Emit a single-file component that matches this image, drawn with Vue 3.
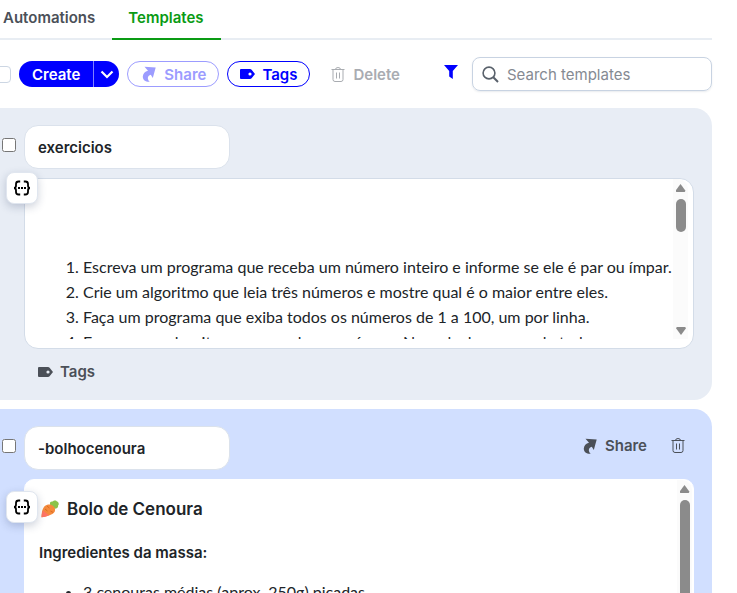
<template>
    <div class="page">
        <nav class="tabs">
            <a href="#automations" class="tab">Automations</a>
            <a href="#templates" class="tab active">Templates</a>
        </nav>

        <div class="toolbar">
            <input type="checkbox" class="select-all" aria-label="Select all" />
            <div class="create-group">
                <button type="button" class="create">Create</button>
                <button type="button" class="create-more" aria-label="More create options">
                    <svg width="14" height="9" viewBox="0 0 14 9"><path d="M1.5 1.5 L7 7 L12.5 1.5" fill="none" stroke="currentColor" stroke-width="2.2" /></svg>
                </button>
            </div>
            <button type="button" class="pill share" disabled>
                <svg class="share-icon" viewBox="0 0 14 16"><path :d="icons.share" fill="currentColor" /></svg>
                Share
            </button>
            <button type="button" class="pill tags">
                <svg class="tag-icon" viewBox="0 0 15 10"><path :d="icons.tag" fill="currentColor" fill-rule="evenodd" /></svg>
                Tags
            </button>
            <button type="button" class="plain delete" disabled>
                <svg class="trash-icon" viewBox="0 0 14 15"><path :d="icons.trash" fill="none" stroke="currentColor" /></svg>
                Delete
            </button>
            <button type="button" class="plain filter" aria-label="Filter">
                <svg width="14" height="18" viewBox="0 0 14 18"><path d="M0 0 H14 L8.8 6 V14 L5.2 11.5 V6 Z" fill="currentColor" /></svg>
            </button>
            <label class="search">
                <svg width="17" height="17" viewBox="0 0 17 17" fill="none" stroke="currentColor" stroke-width="1.6"><circle cx="7" cy="7" r="5.9" /><path d="M11.3 11.3 L16 16" stroke-width="2" /></svg>
                <input type="text" placeholder="Search templates" aria-label="Search templates" />
            </label>
        </div>

        <section v-for="card in cards" :key="card.id" class="card" :class="{ selected: card.selected }">
            <div class="card-head">
                <input type="checkbox" class="pick" :aria-label="`Select ${card.name}`" />
                <input v-model="card.name" type="text" class="name" aria-label="Template name" />
                <div v-if="card.selected" class="actions">
                    <button type="button" class="plain">
                        <svg class="share-icon" viewBox="0 0 14 16"><path :d="icons.share" fill="currentColor" /></svg>
                        Share
                    </button>
                    <button type="button" class="plain" aria-label="Delete">
                        <svg class="trash-icon" viewBox="0 0 14 15"><path :d="icons.trash" fill="none" stroke="currentColor" /></svg>
                    </button>
                </div>
            </div>

            <div class="editor">
                <button type="button" class="variable" aria-label="Insert variable">
                    <svg width="18" height="16" viewBox="0 0 18 16" fill="none" stroke="currentColor" stroke-width="1.8">
                        <path d="M7.2 1.5 H5.6 Q3 1.5 3 4 V5.5 Q3 8 1 8 Q3 8 3 10.5 V12 Q3 14.5 5.6 14.5 H7.2" />
                        <path d="M10.8 1.5 H12.4 Q15 1.5 15 4 V5.5 Q15 8 17 8 Q15 8 15 10.5 V12 Q15 14.5 12.4 14.5 H10.8" />
                        <path d="M5 8 H7 M8 8 H10 M11 8 H13" />
                    </svg>
                </button>
                <div class="content">
                    <ol v-if="!card.selected">
                        <li v-for="line in card.lines" :key="line">{{ line }}</li>
                    </ol>
                    <template v-else>
                        <h3>
                            <svg width="18" height="18" viewBox="0 0 18 18">
                                <path d="M10 6 C8 4 9 1 11.6 1.6 C12.6 0 15.6 0 16 1.6 C18 2 18.2 4.8 17 5.6 C17.6 8 15 9 13 8.6 Z" fill="#8bc34a" />
                                <path d="M0.5 17.3 C0.5 11 2 5.4 7 4.6 C12 4 15 8 13.8 11.4 C12 14.6 6 16.5 0.5 17.3 Z" fill="#f58a3c" />
                                <path d="M0.5 17.3 C0.6 15 1 12.6 2 10.5 L8 15.2 C5.5 16.4 3 17 0.5 17.3 Z" fill="#ff7565" />
                                <path d="M6 6 L8.4 8 M9.5 11 L12 12.4 M4 9 L6.5 11" stroke="#d96b22" stroke-width="1" />
                            </svg>
                            Bolo de Cenoura
                        </h3>
                        <h4>Ingredientes da massa:</h4>
                        <ul>
                            <li v-for="line in card.lines" :key="line">{{ line }}</li>
                        </ul>
                    </template>
                </div>
                <div class="scrollbar" aria-hidden="true">
                    <span class="arrow"></span>
                    <span class="thumb"></span>
                    <span class="arrow down"></span>
                </div>
            </div>

            <button v-if="!card.selected" type="button" class="plain card-tags">
                <svg class="tag-icon" viewBox="0 0 15 10"><path :d="icons.tag" fill="currentColor" fill-rule="evenodd" /></svg>
                Tags
            </button>
        </section>
    </div>
</template>

<script setup>
import { ref } from 'vue'

const icons = {
    share: 'M2.5 0.8 L13.7 1.6 L10.8 12 L8.8 8.8 C5.6 9.8 4.6 13 7.8 15.8 C3.6 16.2 0.6 13.6 0.8 10.4 C1 7.6 3 5.6 6 4.8 Z',
    tag: 'M1 0 H10 Q11 0 11.6 0.8 L15 5 L11.6 9.2 Q11 10 10 10 H1 Q0 10 0 9 V1 Q0 0 1 0 Z M10 3.4 A1.6 1.6 0 1 0 10 6.6 A1.6 1.6 0 1 0 10 3.4 Z',
    trash: 'M0.5 2.5 H13.5 M4.5 2.5 Q4.5 0.5 7 0.5 Q9.5 0.5 9.5 2.5 M2 2.5 V12.5 Q2 14.5 4 14.5 H10 Q12 14.5 12 12.5 V2.5 M5.5 5.5 V11.5 M8.5 5.5 V11.5'
}

const cards = ref([
    {
        id: 1,
        name: 'exercicios',
        selected: false,
        lines: [
            'Escreva um programa que receba um número inteiro e informe se ele é par ou ímpar.',
            'Crie um algoritmo que leia três números e mostre qual é o maior entre eles.',
            'Faça um programa que exiba todos os números de 1 a 100, um por linha.',
            'Escreva um algoritmo que receba um número N e calcule a soma de todos'
        ]
    },
    {
        id: 2,
        name: '-bolhocenoura',
        selected: true,
        lines: ['3 cenouras médias (aprox. 250g) picadas']
    }
])
</script>

<style>
body {
    margin: 0;
    background: #fff;
}
</style>

<style scoped>
.page {
    height: 100vh;
    box-sizing: border-box;
    padding-right: 25px;
    overflow: hidden;
    color: #202428;
    font-family: Inter, "Liberation Sans", sans-serif;
    font-size: 15px;
}

button,
input {
    box-sizing: border-box;
    margin: 0;
    font: inherit;
    color: inherit;
}

button {
    display: flex;
    align-items: center;
    padding: 0;
    border: 0;
    background: none;
    font-weight: 600;
}

svg {
    flex: none;
    display: block;
}

.tabs {
    display: flex;
    height: 40px;
    box-shadow: inset 0 -2px #e8edf3;
}

.tab {
    box-sizing: border-box;
    height: 40px;
    padding: 0 17px 0 3px;
    line-height: 36px;
    color: #4b5058;
    font-weight: 600;
    text-decoration: none;
}

.tab.active {
    padding: 0 17px 0 16px;
    color: #0a9b14;
    border-bottom: 2px solid #0a9b14;
}

.toolbar {
    display: flex;
    align-items: center;
    height: 34px;
    margin: 17px 0;
}

.select-all {
    appearance: none;
    width: 17px;
    height: 17px;
    margin-left: -6px;
    border: 1px solid #ccd6e3;
    border-radius: 4px;
}

.create-group {
    display: flex;
    height: 26px;
    margin-left: 8px;
    border-radius: 13px;
    overflow: hidden;
    background: #0000ff;
    color: #fff;
}

.create {
    padding: 0 13px;
}

.create-more {
    justify-content: center;
    width: 26px;
    border-left: 1px solid #8080ff;
}

.pill {
    height: 26px;
    margin-left: 8px;
    padding: 0 12px;
    border: 1px solid currentColor;
    border-radius: 13px;
    color: #0000ff;
}

.share {
    gap: 8px;
    padding: 0 12px 0 14px;
    color: #9c9cff;
}

.tags {
    gap: 7px;
}

.plain {
    gap: 8px;
    color: #4b5058;
}

.delete {
    margin-left: 21px;
    color: #a9acb1;
}

.share-icon {
    width: 14px;
    height: 16px;
}

.tag-icon {
    width: 15px;
    height: 10px;
}

.trash-icon {
    width: 14px;
    height: 15px;
}

.filter {
    margin-left: auto;
    color: #0000ff;
}

.search {
    box-sizing: border-box;
    display: flex;
    align-items: center;
    gap: 8px;
    width: 240px;
    height: 34px;
    margin-left: 14px;
    padding: 0 9px;
    border: 1px solid #c8d3e2;
    border-radius: 8px;
    box-shadow: 0 1px 2px rgba(40, 60, 90, 0.1);
    color: #59616b;
}

.search input {
    flex: 1;
    min-width: 0;
    padding: 0;
    border: 0;
    outline: 0;
    background: none;
}

.search input::placeholder {
    color: #858a92;
}

.card {
    box-sizing: border-box;
    height: 292px;
    margin-bottom: 9px;
    padding: 17px 18px 0 0;
    border-radius: 0 18px 18px 0;
    background: #e8edf5;
}

.card.selected {
    height: 400px;
    background: #d1dfff;
}

.card-head {
    display: flex;
    align-items: center;
    gap: 8px;
    height: 44px;
    margin-bottom: 9px;
    padding-left: 2px;
}

.pick {
    width: 14px;
    height: 14px;
    margin-bottom: 5px;
}

.name {
    width: 206px;
    height: 44px;
    padding: 0 13px;
    border: 1px solid #dbe2ec;
    border-radius: 14px;
    outline: 0;
    background: #fff;
    font-weight: 600;
}

.actions {
    display: flex;
    gap: 24px;
    margin-left: auto;
    padding-right: 9px;
    margin-bottom: 5px;
}

.editor {
    position: relative;
    box-sizing: border-box;
    display: flex;
    height: 171px;
    margin-left: 24px;
    padding: 0 5px 9px 14px;
    border: 1px solid #d3dce8;
    border-radius: 14px;
    background: #fff;
}

.selected .editor {
    height: 320px;
    padding-right: 1px;
    border-color: #fff;
    border-radius: 10px;
}

.variable {
    position: absolute;
    top: -7px;
    left: -19px;
    justify-content: center;
    width: 32px;
    height: 32px;
    border: 1px solid #e0e6ef;
    border-radius: 8px;
    background: #fff;
    box-shadow: 0 3px 8px rgba(30, 50, 90, 0.22);
    color: #000;
}

.selected .variable {
    top: 11px;
}

.content {
    flex: 1;
    min-width: 0;
    overflow: hidden;
}

ol,
ul {
    margin: 0;
    padding: 0 0 0 44px;
    font-family: Lato, "Liberation Sans", sans-serif;
    font-size: 16px;
    line-height: 25px;
    white-space: nowrap;
}

ol {
    margin-top: 75px;
}

h3 {
    display: flex;
    align-items: center;
    gap: 8px;
    margin: 16px 0 18px 2px;
    font-size: 17px;
    font-weight: 600;
    line-height: 26px;
}

h4 {
    margin: 0 0 14px;
    font-size: 15px;
    font-weight: 600;
    line-height: 25px;
}

.scrollbar {
    display: flex;
    flex-direction: column;
    align-items: center;
    gap: 7px;
    box-sizing: border-box;
    width: 15px;
    padding: 5px 0 4px;
    border-radius: 0 10px 0 0;
    background: #fbfbfb;
}

.arrow {
    width: 10px;
    height: 8px;
    background: #8b8b8b;
    clip-path: polygon(50% 0, 100% 85%, 92% 100%, 8% 100%, 0 85%);
}

.arrow.down {
    margin-top: auto;
    transform: rotate(180deg);
}

.thumb {
    width: 10px;
    height: 33px;
    border-radius: 5px;
    background: #8b8b8b;
}

.selected .thumb {
    height: 240px;
}

.card-tags {
    margin: 13px 0 0 38px;
    gap: 7px;
}
</style>
